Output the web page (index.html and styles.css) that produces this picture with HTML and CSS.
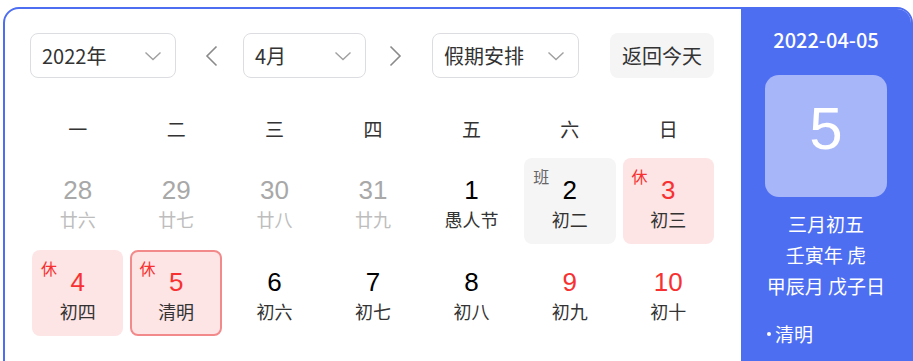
FILE: index.html
```html
<!DOCTYPE html>
<html lang="zh-CN">
<head>
<meta charset="utf-8">
<title>万年历</title>
<link rel="stylesheet" href="styles.css">
</head>
<body>
<div class="calendar">
  <div class="main">
    <div class="toolbar">
      <div class="select select-year"><span>2022年</span>
        <svg class="chev" width="18" height="10" viewBox="0 0 18 10"><polyline points="1.5,1.5 9,8.5 16.5,1.5"/></svg>
      </div>
      <div class="arrow arrow-prev">
        <svg width="13" height="22" viewBox="0 0 13 22"><polyline points="11.5,1.5 2,11 11.5,20.5"/></svg>
      </div>
      <div class="select select-month"><span>4月</span>
        <svg class="chev" width="18" height="10" viewBox="0 0 18 10"><polyline points="1.5,1.5 9,8.5 16.5,1.5"/></svg>
      </div>
      <div class="arrow arrow-next">
        <svg width="13" height="22" viewBox="0 0 13 22"><polyline points="1.5,1.5 11,11 1.5,20.5"/></svg>
      </div>
      <div class="select select-holiday"><span>假期安排</span>
        <svg class="chev" width="18" height="10" viewBox="0 0 18 10"><polyline points="1.5,1.5 9,8.5 16.5,1.5"/></svg>
      </div>
      <div class="today-btn">返回今天</div>
    </div>

    <div class="grid">
      <div class="wk">一</div><div class="wk">二</div><div class="wk">三</div><div class="wk">四</div><div class="wk">五</div><div class="wk">六</div><div class="wk">日</div>

      <div class="day other"><div class="num">28</div><div class="lunar">廿六</div></div>
      <div class="day other"><div class="num">29</div><div class="lunar">廿七</div></div>
      <div class="day other"><div class="num">30</div><div class="lunar">廿八</div></div>
      <div class="day other"><div class="num">31</div><div class="lunar">廿九</div></div>
      <div class="day"><div class="num">1</div><div class="lunar">愚人节</div></div>
      <div class="day work"><span class="tag">班</span><div class="num">2</div><div class="lunar">初二</div></div>
      <div class="day rest"><span class="tag">休</span><div class="num red">3</div><div class="lunar">初三</div></div>

      <div class="day rest"><span class="tag">休</span><div class="num red">4</div><div class="lunar">初四</div></div>
      <div class="day rest selected"><span class="tag">休</span><div class="num red">5</div><div class="lunar">清明</div></div>
      <div class="day"><div class="num">6</div><div class="lunar">初六</div></div>
      <div class="day"><div class="num">7</div><div class="lunar">初七</div></div>
      <div class="day"><div class="num">8</div><div class="lunar">初八</div></div>
      <div class="day"><div class="num red">9</div><div class="lunar">初九</div></div>
      <div class="day"><div class="num red">10</div><div class="lunar">初十</div></div>
    </div>
  </div>

  <div class="side">
    <div class="side-date">2022-04-05</div>
    <div class="big-day"><span>5</span></div>
    <div class="side-lines">
      <div>三月初五</div>
      <div>壬寅年 虎</div>
      <div>甲辰月 戊子日</div>
    </div>
    <div class="festival"><i class="dot"></i>清明</div>
  </div>
</div>
</body>
</html>
```

FILE: styles.css
```css
html, body {
  margin: 0;
  padding: 0;
  background: #fff;
  overflow: hidden;
}

body {
  font-family: "Noto Sans CJK SC", "Liberation Sans", sans-serif;
  color: #333;
}

.calendar {
  margin: 7px 0 0 3px;
  width: 910px;
  height: 380px;
  box-sizing: border-box;
  border: 2px solid #4e6ef2;
  border-radius: 16px;
  display: flex;
  overflow: hidden;
}

.main {
  flex: 1;
  padding: 24px 27px 0 25px;
}

.toolbar {
  display: flex;
  align-items: center;
  height: 45px;
}

.select {
  height: 45px;
  box-sizing: border-box;
  border: 1px solid #dcdde1;
  border-radius: 8px;
  display: flex;
  align-items: center;
  justify-content: space-between;
  padding: 0 13px 0 11px;
  font-size: 20px;
  color: #333;
}

.select-year { width: 146px; }
.select-month { width: 123px; }
.select-holiday { width: 147px; }

.chev polyline {
  fill: none;
  stroke: #a0a0a0;
  stroke-width: 1.4;
}

.arrow {
  width: 67px;
  height: 45px;
  display: flex;
  align-items: center;
  justify-content: center;
}

.arrow-prev { padding-left: 4px; box-sizing: border-box; }
.arrow-next { width: 66px; padding-right: 8px; box-sizing: border-box; }

.arrow polyline {
  fill: none;
  stroke: #8a8a8a;
  stroke-width: 1.6;
}

.today-btn {
  margin-left: 31px;
  width: 104px;
  height: 45px;
  border-radius: 8px;
  background: #f5f5f6;
  display: flex;
  align-items: center;
  justify-content: center;
  font-size: 20px;
  color: #333;
}

.grid {
  margin: 31px 0 0 2px;
  display: grid;
  grid-template-columns: repeat(7, 1fr);
  grid-template-rows: 43px 86px 86px;
  column-gap: 7px;
  row-gap: 6px;
}

.wk {
  text-align: center;
  font-size: 19px;
  line-height: 40px;
  color: #333;
}

.day {
  position: relative;
  border-radius: 8px;
  box-sizing: border-box;
  padding-top: 17px;
  text-align: center;
}

.num {
  font-family: "Liberation Sans", Arial, sans-serif;
  font-size: 26px;
  line-height: 30px;
  color: #000;
}

.num.red { color: #f73131; }

.lunar {
  margin-top: 2px;
  font-size: 18px;
  line-height: 24px;
  color: #333;
}

.other .num { color: #a8a8a8; }
.other .lunar { color: #bdbdbd; }

.tag {
  position: absolute;
  top: 9px;
  left: 9px;
  font-size: 16px;
  line-height: 18px;
}

.work { background: #f5f5f6; }
.work .tag { color: #666; }

.rest { background: #fde4e5; }
.rest .tag { color: #f73131; }

.selected {
  border: 2px solid #f28a8c;
  padding-top: 15px;
}
.selected .tag { top: 7px; left: 7px; }

.side {
  width: 170px;
  background: #4e6ef2;
  color: #fff;
  display: flex;
  flex-direction: column;
  align-items: center;
  padding-top: 17px;
}

.side-date {
  font-size: 20px;
  line-height: 28px;
  font-weight: 500;
}

.big-day {
  margin-top: 21px;
  width: 122px;
  height: 122px;
  border-radius: 14px;
  background: #a7b6f8;
  display: flex;
  align-items: center;
  justify-content: center;
  box-sizing: border-box;
  padding-bottom: 14px;
  font-family: "Liberation Sans", Arial, sans-serif;
  font-size: 60px;
  line-height: 1;
}

.side-lines {
  margin-top: 11px;
  text-align: center;
  font-size: 19px;
  line-height: 31px;
}

.festival {
  align-self: flex-start;
  margin: 18px 0 0 26px;
  font-size: 19px;
  line-height: 30px;
  display: flex;
  align-items: center;
}

.dot {
  width: 4px;
  height: 4px;
  border-radius: 50%;
  background: #fff;
  margin-right: 4px;
}
```
